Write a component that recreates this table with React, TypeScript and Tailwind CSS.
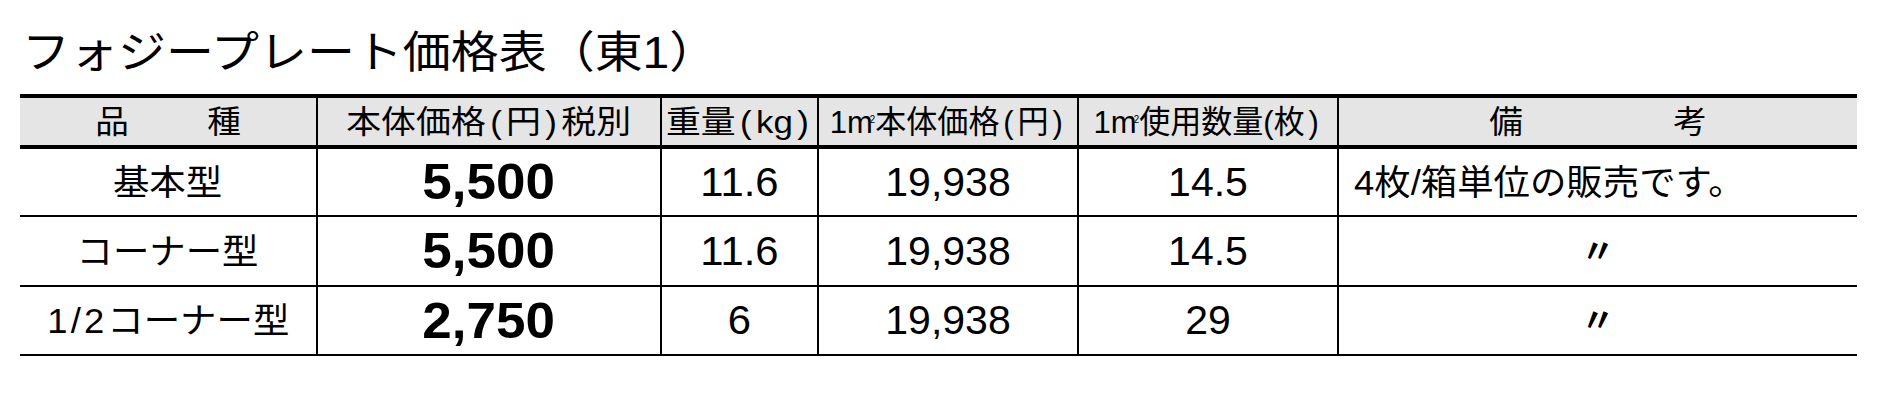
import React from "react";

const F = "font-['Liberation_Sans','Noto_Sans_CJK_JP',sans-serif]";

function P({ c }: { c: string }) {
  return <span className="mx-[4px]">{c}</span>;
}

function M2() {
  return (
    <>
      1m<span className="relative -top-[10px] -ml-[3px] text-[10px]">2</span>
    </>
  );
}

const rows = [
  { name: "基本型", price: "5,500", w: "11.6", p: "19,938", q: "14.5", note: "4枚/箱単位の販売です。", h: "h-[68px]" },
  { name: "コーナー型", price: "5,500", w: "11.6", p: "19,938", q: "14.5", note: "〃", h: "h-[70px]" },
  { name: "1/2コーナー型", price: "2,750", w: "6", p: "19,938", q: "29", note: "〃", h: "h-[69px]" },
];

export default function App() {
  return (
    <div className={`w-[1896px] h-[408px] bg-white text-black ${F} pt-[31px]`}>
      <div className="ml-[22px] mb-[19px] flex">
        <span className="text-[44px] leading-none whitespace-nowrap origin-left scale-x-[1.09]">
          フォジープレート価格表（東1）
        </span>
      </div>
      <div className="ml-[20px] w-[1837px]">
        {/* header */}
        <div className="grid grid-cols-[296px_344px_157px_260px_260px_520px] h-[55px] border-t-4 border-b-4 border-black bg-[#e5e5e5] text-[32px] leading-none">
          <div className="flex items-center justify-center gap-[80px]">
            <span className="scale-x-[1.05]">品</span>
            <span className="scale-x-[1.05]">種</span>
          </div>
          <div className="flex items-center justify-center border-l-2 border-black">
            <span className="whitespace-nowrap scale-x-[1.09]">
              本体価格<P c="(" />円<P c=")" />税別
            </span>
          </div>
          <div className="flex items-center justify-center border-l-2 border-black">
            <span className="whitespace-nowrap scale-x-[1.09]">
              重量<P c="(" />kg<P c=")" />
            </span>
          </div>
          <div className="flex items-center justify-center border-l-2 border-black">
            <span className="whitespace-nowrap scale-x-[0.97]">
              <M2 />本体価格<P c="(" />円<P c=")" />
            </span>
          </div>
          <div className="flex items-center justify-center border-l-2 border-black">
            <span className="whitespace-nowrap scale-x-[0.97]">
              <M2 />使用数量(枚<P c=")" />
            </span>
          </div>
          <div className="flex items-center justify-center gap-[152px] border-l-2 border-black">
            <span className="scale-x-[1.05]">備</span>
            <span className="scale-x-[1.05]">考</span>
          </div>
        </div>
        {/* body */}
        {rows.map((r, i) => (
          <div
            key={i}
            className={`grid grid-cols-[296px_344px_157px_260px_260px_520px] ${r.h} border-b-2 border-black leading-none`}
          >
            <div className="flex items-center justify-center text-[35px]">
              <span className="whitespace-nowrap scale-x-[1.04]">
                {r.name.startsWith("1/2") ? (
                  <>
                    <span className="tracking-[3px]">1/2</span>
                    {r.name.slice(3)}
                  </>
                ) : (
                  r.name
                )}
              </span>
            </div>
            <div className="flex items-center justify-center border-l-2 border-black text-[50px] font-bold">
              <span className="scale-x-[1.06]">{r.price}</span>
            </div>
            <div className="flex items-center justify-center border-l-2 border-black text-[41px]">
              <span className="scale-x-[1.02]">{r.w}</span>
            </div>
            <div className="flex items-center justify-center border-l-2 border-black text-[41px]">
              <span className="scale-x-[1.0]">{r.p}</span>
            </div>
            <div className="flex items-center justify-center border-l-2 border-black text-[41px]">
              <span className="scale-x-[1.0]">{r.q}</span>
            </div>
            {r.note === "〃" ? (
              <div className="flex items-center justify-center border-l-2 border-black text-[33px] font-bold">
                <span>〃</span>
              </div>
            ) : (
              <div className="flex items-center border-l-2 border-black pl-[15px] text-[35px]">
                <span className="whitespace-nowrap origin-left scale-x-[1.04]">{r.note}</span>
              </div>
            )}
          </div>
        ))}
      </div>
    </div>
  );
}
